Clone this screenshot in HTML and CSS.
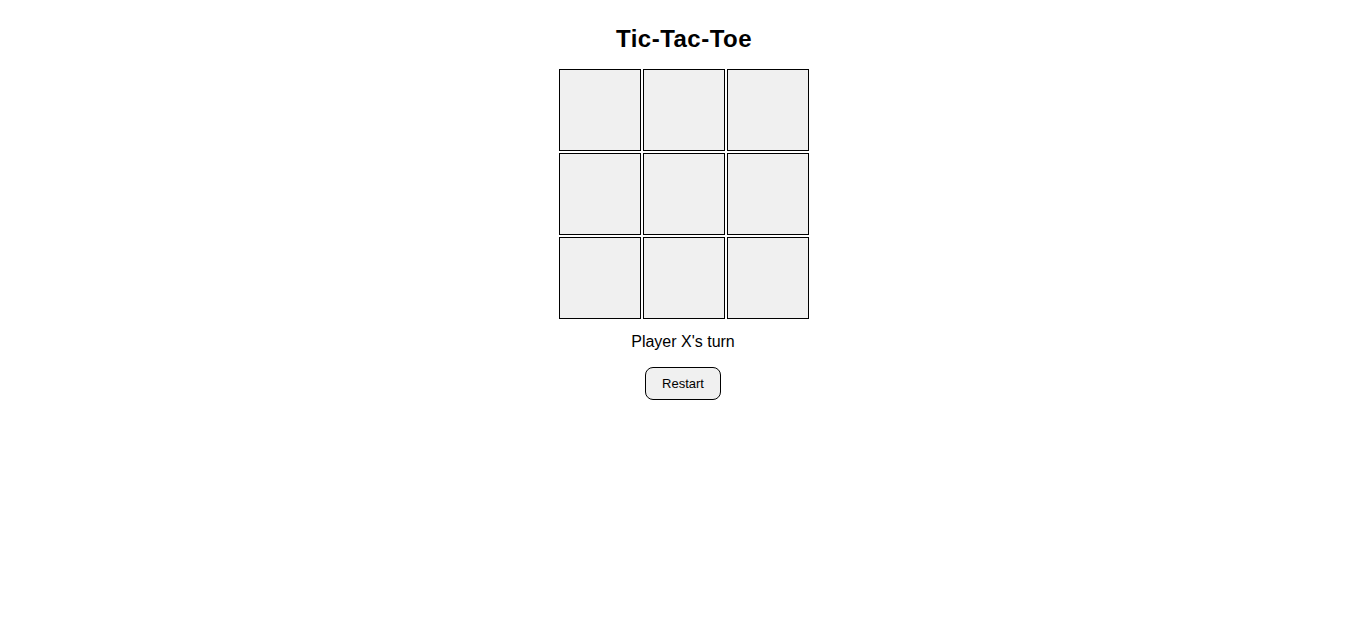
FILE: index.html
```html
<!DOCTYPE html>
<html>
<head>
<meta charset="utf-8">
<title>Tic-Tac-Toe</title>
<link rel="stylesheet" href="styles.css">
</head>
<body>
<main class="game">
  <h1 class="title">Tic-Tac-Toe</h1>
  <div class="board">
    <div class="cell"></div>
    <div class="cell"></div>
    <div class="cell"></div>
    <div class="cell"></div>
    <div class="cell"></div>
    <div class="cell"></div>
    <div class="cell"></div>
    <div class="cell"></div>
    <div class="cell"></div>
  </div>
  <p class="status">Player X's turn</p>
  <button class="restart">Restart</button>
</main>
</body>
</html>
```

FILE: styles.css
```css
html, body {
  margin: 0;
  padding: 0;
  background: #ffffff;
}
body {
  font-family: "Liberation Sans", Arial, sans-serif;
  color: #000;
}
.game {
  display: flex;
  flex-direction: column;
  align-items: center;
  padding-left: 2px;
}
.title {
  font-size: 24px;
  font-weight: bold;
  letter-spacing: 0.5px;
  margin: 25px 0 0;
  line-height: 27.6px;
}
.board {
  margin-top: 16px;
  display: grid;
  grid-template-columns: repeat(3, 82px);
  grid-template-rows: repeat(3, 82px);
  gap: 2px;
}
.cell {
  box-sizing: border-box;
  border: 1px solid #000;
  background: #f0f0f0;
}
.status {
  margin: 14px 2px 0 0;
  font-size: 16px;
  line-height: 18.4px;
}
.restart {
  margin: 16px 2px 0 0;
  box-sizing: border-box;
  height: 33px;
  width: 76px;
  padding: 0;
  font-family: "Liberation Sans", Arial, sans-serif;
  font-size: 13px;
  color: #000;
  background: #f0f0f0;
  border: 1px solid #000;
  border-radius: 8px;
}
```
